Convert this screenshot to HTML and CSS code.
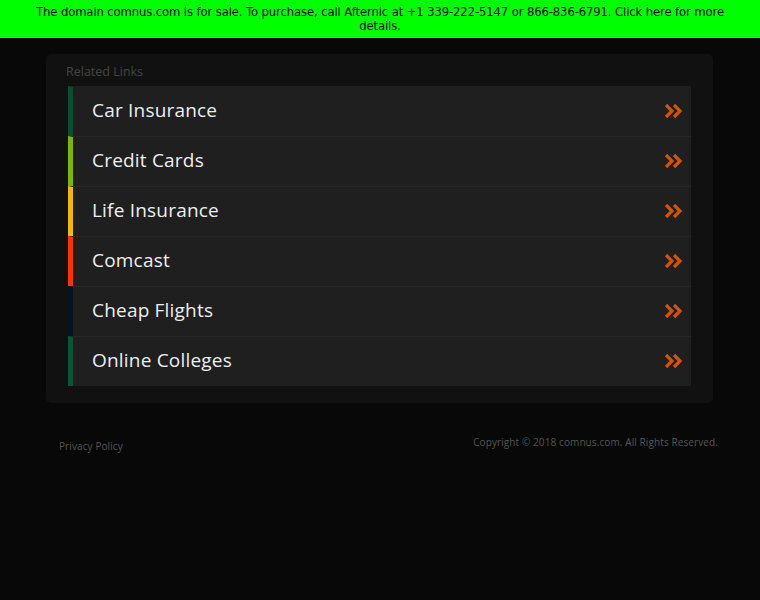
FILE: index.html
```html
<!DOCTYPE html>
<html>
<head>
<meta charset="utf-8">
<link rel="stylesheet" href="styles.css">
</head>
<body>
<div class="topbar">The domain comnus.com is for sale. To purchase, call Afternic at +1 339-222-5147 or 866-836-6791. Click here for more details.</div>
<div class="main">
  <div class="box">
    <div class="label">Related Links</div>
    <ul class="links">
      <li class="c1"><span>Car Insurance</span><svg class="arr" viewBox="0 0 19 16"><path d="M2 2 L8 8 L2 14 M10 2 L16 8 L10 14"/></svg></li>
      <li class="c2"><span>Credit Cards</span><svg class="arr" viewBox="0 0 19 16"><path d="M2 2 L8 8 L2 14 M10 2 L16 8 L10 14"/></svg></li>
      <li class="c3"><span>Life Insurance</span><svg class="arr" viewBox="0 0 19 16"><path d="M2 2 L8 8 L2 14 M10 2 L16 8 L10 14"/></svg></li>
      <li class="c4"><span>Comcast</span><svg class="arr" viewBox="0 0 19 16"><path d="M2 2 L8 8 L2 14 M10 2 L16 8 L10 14"/></svg></li>
      <li class="c5"><span>Cheap Flights</span><svg class="arr" viewBox="0 0 19 16"><path d="M2 2 L8 8 L2 14 M10 2 L16 8 L10 14"/></svg></li>
      <li class="c6"><span>Online Colleges</span><svg class="arr" viewBox="0 0 19 16"><path d="M2 2 L8 8 L2 14 M10 2 L16 8 L10 14"/></svg></li>
    </ul>
  </div>
  <div class="footer">
    <div class="privacy">Privacy Policy</div>
    <div class="copy">Copyright &copy; 2018 comnus.com. All Rights Reserved.</div>
  </div>
</div>
</body>
</html>
```
FILE: styles.css
```css
html, body { margin: 0; padding: 0; }
body { background: #080808; font-family: "DejaVu Sans", sans-serif; height: 600px; }
.topbar {
  background: #00ff00; color: #000; text-align: center;
  font-size: 11.6px; line-height: 14px; padding: 5px 30px; letter-spacing: -0.1px; height: 28px; box-sizing: content-box;
}
.main { width: 667px; margin: 16px 0 0 46px; }
.box { background: #111111; border-radius: 5px; padding: 10px 22px 17px 22px; }
.label { color: #444; font-size: 12.5px; line-height: 16px; margin-left: -2px; height: 22px; font-family: "Open Sans", sans-serif; }
.links { list-style: none; margin: 0; padding: 0; }
.links li {
  height: 50px; box-sizing: border-box; background: #1f1f1f; border-left: 5px solid #0a4d30;
  border-top: 1px solid #262626;
  display: flex; align-items: center; justify-content: space-between; padding: 0 8px 0 19px;
}
.links li:first-child { border-top-color: #1f1f1f; }
.links li span { color: #eeeeee; font-family: "Open Sans", sans-serif; font-size: 19px; letter-spacing: 0.2px; margin-top: -4px; }
.arr { width: 19px; height: 16px; margin-top: -2px; }
.arr path { fill: none; stroke: #d35400; stroke-width: 3.2; stroke-linejoin: miter; stroke-linecap: butt; }
.links li.c1 { border-left-color: #0a4d30; }
.links li.c2 { border-left-color: #7ab800; }
.links li.c3 { border-left-color: #f5b800; }
.links li.c4 { border-left-color: #ff3300; }
.links li.c5 { border-left-color: #021520; }
.links li.c6 { border-left-color: #0a5535; }
.footer { display: flex; justify-content: space-between; margin-top: 32px; padding-left: 13px; margin-right: -5px; font-family: "Open Sans", sans-serif; }
.privacy { color: #555; font-size: 10px; margin-top: 4px; letter-spacing: 0.1px; }
.copy { color: #555; font-size: 10px; letter-spacing: 0.1px; }
```
